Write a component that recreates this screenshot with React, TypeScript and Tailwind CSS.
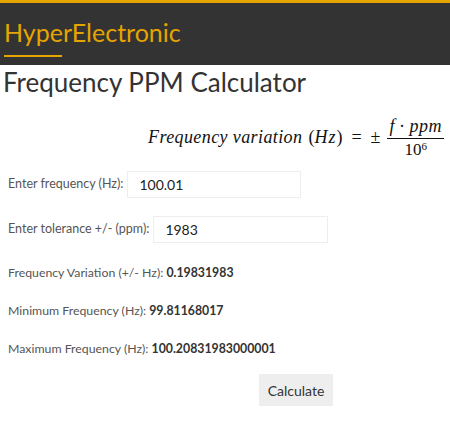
import React from "react";

export default function App() {
  const font = { fontFamily: '"Lato", "Open Sans", sans-serif' };
  return (
    <div className="w-[450px] h-[426px] bg-white overflow-hidden" style={font}>
      <header className="border-t-[3px] border-[#e5a400] bg-[#333333] h-[65px] pl-[4px] pt-[13px]">
        <div className="text-[25px] leading-[32px] text-[#e5a400]">HyperElectronic</div>
        <div className="mt-[7px] w-[58px] h-[2px] bg-[#e5a400]" />
      </header>
      <h2 className="pl-[3px] text-[26px] leading-[32px] text-[#333333] mt-[1px]">Frequency PPM Calculator</h2>
      <div className="flex justify-end pr-[6px] mt-[18px] items-center text-[#111]" style={{ fontFamily: '"Liberation Serif", serif' }}>
        <span className="italic text-[18px] tracking-[0.4px]">Frequency variation</span>
        <span className="text-[18px] ml-[6px]">(</span>
        <span className="italic text-[18px] tracking-[1px]">Hz</span>
        <span className="text-[18px]">)</span>
        <span className="text-[18px] mx-[9px]">=</span>
        <span className="text-[18px] mr-[7px]">±</span>
        <span className="flex flex-col items-center">
          <span className="text-[18px] leading-[20px] px-[2px]"><i>f</i> · <i className="tracking-[0.5px]">ppm</i></span>
          <span className="w-full h-[1px] bg-[#111] my-[2px]" />
          <span className="text-[17px] leading-[18px]">10<sup className="text-[11px]">6</sup></span>
        </span>
      </div>
      <div className="pl-[8px] text-[12.5px] text-[#555]">
        <div className="flex items-center mt-[12px]">
          <span>Enter frequency (Hz):</span>
          <div className="ml-[4px] w-[174px] h-[27px] border border-[#eeeeee] pl-[11px] flex items-center text-[14px] text-[#222]">100.01</div>
        </div>
        <div className="flex items-center mt-[18px]">
          <span>Enter tolerance +/- (ppm):</span>
          <div className="ml-[4px] w-[175px] h-[27px] border border-[#eeeeee] pl-[11px] flex items-center text-[14px] text-[#222]">1983</div>
        </div>
        <div className="mt-[20px] leading-[20px] text-[12.3px]">Frequency Variation (+/- Hz): <b className="text-[#333]">0.19831983</b></div>
        <div className="mt-[18px] leading-[20px] text-[12.3px]">Minimum Frequency (Hz): <b className="text-[#333]">99.81168017</b></div>
        <div className="mt-[18px] leading-[20px] text-[12.3px]">Maximum Frequency (Hz): <b className="text-[#333]">100.20831983000001</b></div>
      </div>
      <div className="flex pl-[259px] mt-[15px]">
        <button className="w-[74px] h-[32px] bg-[#eeeeee] text-[14px] text-[#333]">Calculate</button>
      </div>
    </div>
  );
}
